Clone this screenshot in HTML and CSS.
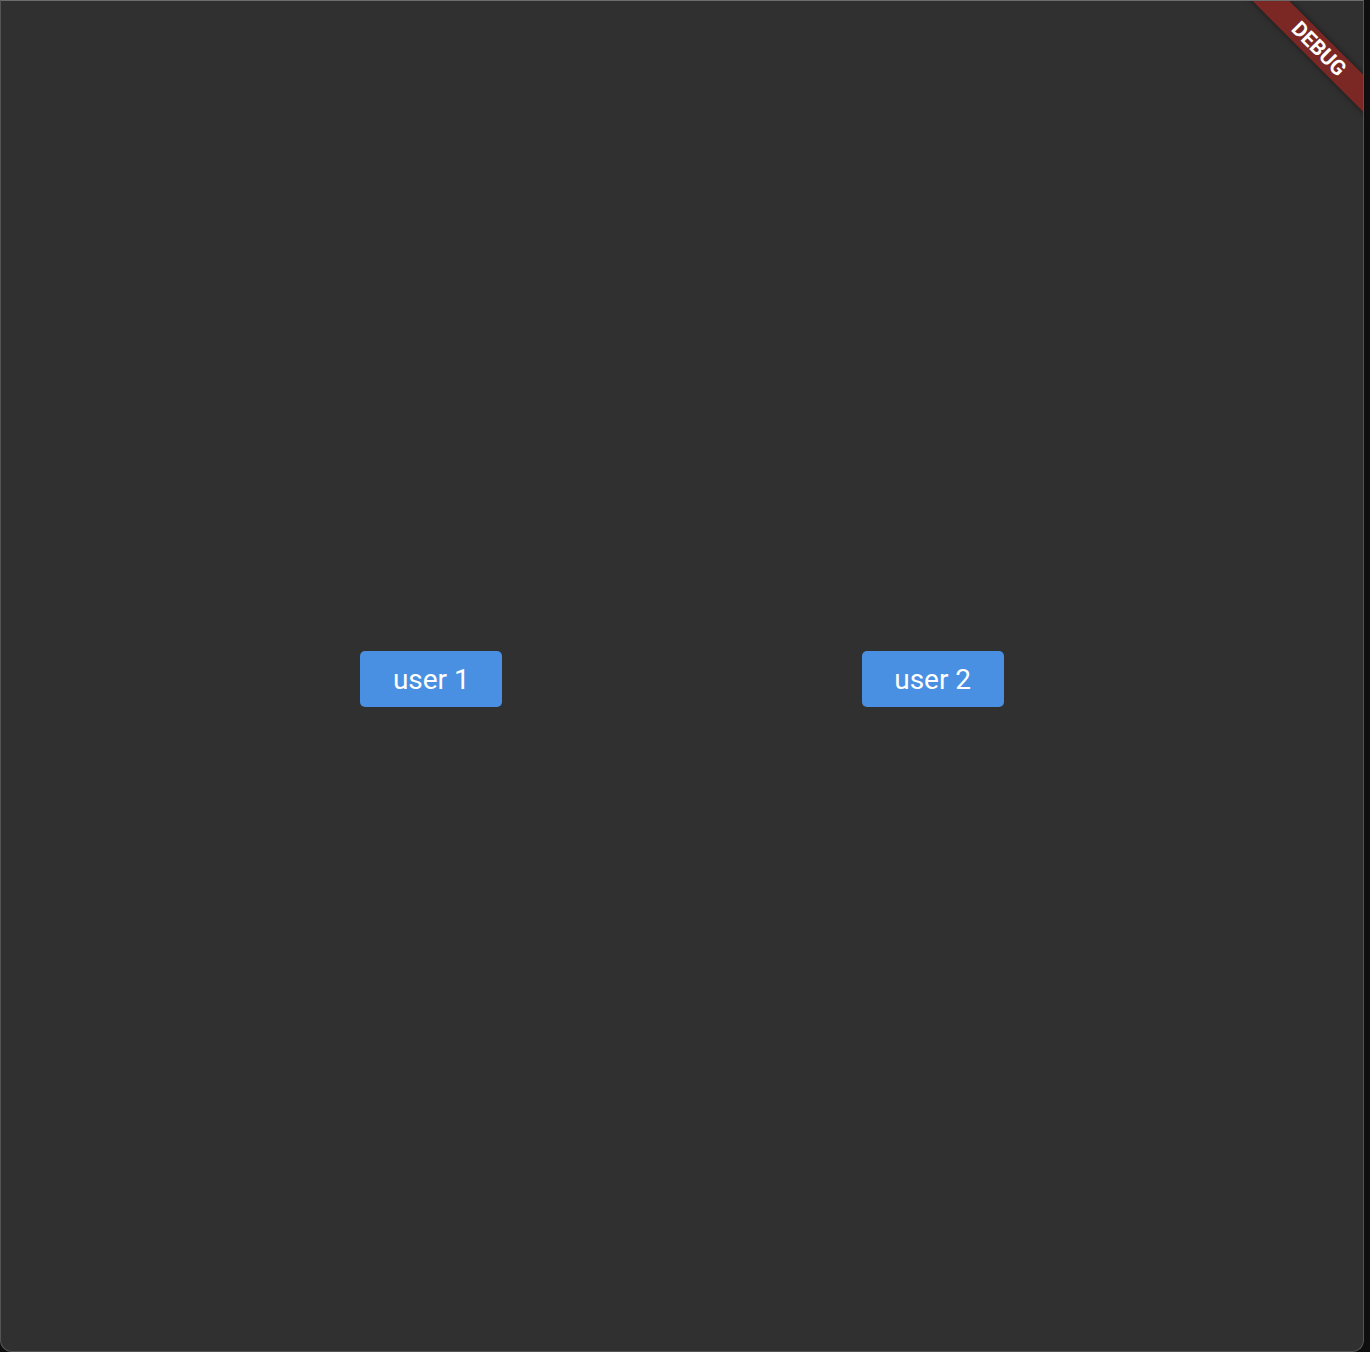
FILE: index.html
```html
<!DOCTYPE html>
<html>
<head>
<meta charset="utf-8">
<link rel="stylesheet" href="styles.css">
</head>
<body>
<div class="window">
  <button class="user-btn">user 1</button>
  <button class="user-btn">user 2</button>
  <div class="debug-banner">DEBUG</div>
</div>
</body>
</html>
```
FILE: styles.css
```css
html, body {
  margin: 0;
  padding: 0;
  background: #0e0e0e;
}
body {
  width: 1370px;
  height: 1352px;
  overflow: hidden;
}
.window {
  position: relative;
  box-sizing: border-box;
  width: 1364px;
  height: 1352px;
  padding-top: 6px;
  background: #303030;
  border: 1px solid #555555;
  border-top-color: #6c6c6c;
  border-radius: 0 0 12px 12px;
  overflow: hidden;
  display: flex;
  align-items: center;
  justify-content: space-evenly;
}
.user-btn {
  width: 142px;
  height: 56px;
  border: none;
  border-radius: 5px;
  background: #4a90e2;
  color: #ffffff;
  font-family: Roboto, "Liberation Sans", sans-serif;
  font-size: 28px;
  padding: 0;
  margin: 0;
}
.debug-banner {
  position: absolute;
  left: 1215px;
  top: 32px;
  box-sizing: border-box;
  width: 200px;
  height: 26px;
  padding-left: 8px;
  line-height: 26px;
  transform: rotate(45deg);
  background: #7b2825;
  box-shadow: 0 0 6px rgba(0, 0, 0, 0.5);
  color: #ffffff;
  font-family: Roboto, "Liberation Sans", sans-serif;
  font-weight: 700;
  font-size: 21px;
  text-align: center;
}
```
